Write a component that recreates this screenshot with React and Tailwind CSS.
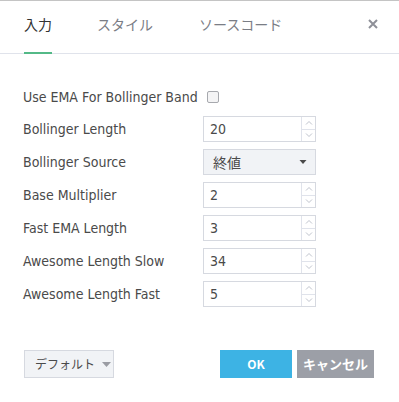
import React from "react";

const FONT = { fontFamily: '"DejaVu Sans Condensed", Tahoma, "Noto Sans CJK JP", sans-serif' };
const JP = { fontFamily: '"Noto Sans CJK JP", "DejaVu Sans", sans-serif' };

const ROWS = [
  { label: "Bollinger Length", value: "20" },
  { label: "Bollinger Source", select: "終値" },
  { label: "Base Multiplier", value: "2" },
  { label: "Fast EMA Length", value: "3" },
  { label: "Awesome Length Slow", value: "34" },
  { label: "Awesome Length Fast", value: "5" },
];

function Spin() {
  return (
    <div className="flex w-[14px] flex-col border-l border-[#e0e3eb]">
      <div className="flex flex-1 items-center justify-center">
        <svg width="8" height="5" viewBox="0 0 8 5"><path d="M1 4.5 L4 1.5 L7 4.5" fill="none" stroke="#b8bcc6" strokeWidth="0.9" /></svg>
      </div>
      <div className="flex flex-1 items-center justify-center border-t border-[#e0e3eb]">
        <svg width="8" height="5" viewBox="0 0 8 5"><path d="M1 0.5 L4 3.5 L7 0.5" fill="none" stroke="#b8bcc6" strokeWidth="0.9" /></svg>
      </div>
    </div>
  );
}

function NumberInput({ value }) {
  return (
    <div className="flex h-[26px] w-[113px] border border-[#d6d9e0] bg-white">
      <div className="flex flex-1 items-center pl-[6px] text-[14px] text-[#4a4a4a]">{value}</div>
      <Spin />
    </div>
  );
}

function SelectBox({ value }) {
  return (
    <div className="flex h-[26px] w-[113px] items-center justify-between border border-[#d6d9e0] bg-[#f1f3f6] pl-[9px] pr-[8px]">
      <span className="text-[14px] text-[#4a4a4a]" style={JP}>{value}</span>
      <svg width="8" height="4" viewBox="0 0 8 4"><path d="M0.5 0 L7.5 0 L4 4 Z" fill="#4a4a4a" /></svg>
    </div>
  );
}

export default function App() {
  return (
    <div className="h-[402px] w-[399px] border-t border-[#c4c4c4] bg-white" style={FONT}>
      <div className="flex h-[53px] items-stretch border-b border-[#e0e3eb] pb-[6px] pl-[24px] pr-[21px]" style={JP}>
        <div className="relative flex items-center text-[14px] text-[#333]">
          入力
          <div className="absolute bottom-[-7px] left-0 h-[2px] w-[28px] bg-[#53b987]" />
        </div>
        <div className="ml-[45px] flex items-center text-[14px] text-[#7a7d85]">スタイル</div>
        <div className="ml-[46px] flex items-center text-[14px] text-[#7a7d85]">ソースコード</div>
        <div className="ml-auto flex items-center">
          <svg width="10" height="10" viewBox="0 0 10 10"><path d="M1 1 L9 9 M9 1 L1 9" stroke="#8e9098" strokeWidth="2" /></svg>
        </div>
      </div>

      <div className="flex flex-col gap-[7px] pl-[23px] pt-[31px]">
        <div className="flex h-[24px] items-center">
          <span className="w-[180px] text-[14px] text-[#4a4a4a]">Use EMA For Bollinger Band</span>
          <div className="ml-[4px] h-[12px] w-[12px] rounded-[2px] border border-[#a7a9ae] bg-[#f4f4f5]" />
        </div>
        {ROWS.map((r) => (
          <div key={r.label} className="flex h-[26px] items-center">
            <span className="w-[180px] text-[14px] text-[#4a4a4a]">{r.label}</span>
            {r.select ? <SelectBox value={r.select} /> : <NumberInput value={r.value} />}
          </div>
        ))}
      </div>

      <div className="mt-[43px] flex items-center pl-[24px] pr-[25px]" style={JP}>
        <div className="flex h-[28px] w-[90px] items-center gap-[7px] whitespace-nowrap border border-[#d6d9e0] bg-[#f1f3f6] pl-[10px] text-[12px] text-[#4a4a4a]">
          デフォルト
          <svg width="9" height="5" viewBox="0 0 9 5"><path d="M0 0 L9 0 L4.5 5 Z" fill="#9a9ca3" /></svg>
        </div>
        <div className="ml-auto flex h-[28px] w-[72px] items-center justify-center bg-[#3db3e4] text-[12px] font-bold text-white">OK</div>
        <div className="ml-[5px] flex h-[28px] w-[77px] items-center justify-center whitespace-nowrap bg-[#9c9fa7] text-[13px] font-bold text-white">キャンセル</div>
      </div>
    </div>
  );
}
